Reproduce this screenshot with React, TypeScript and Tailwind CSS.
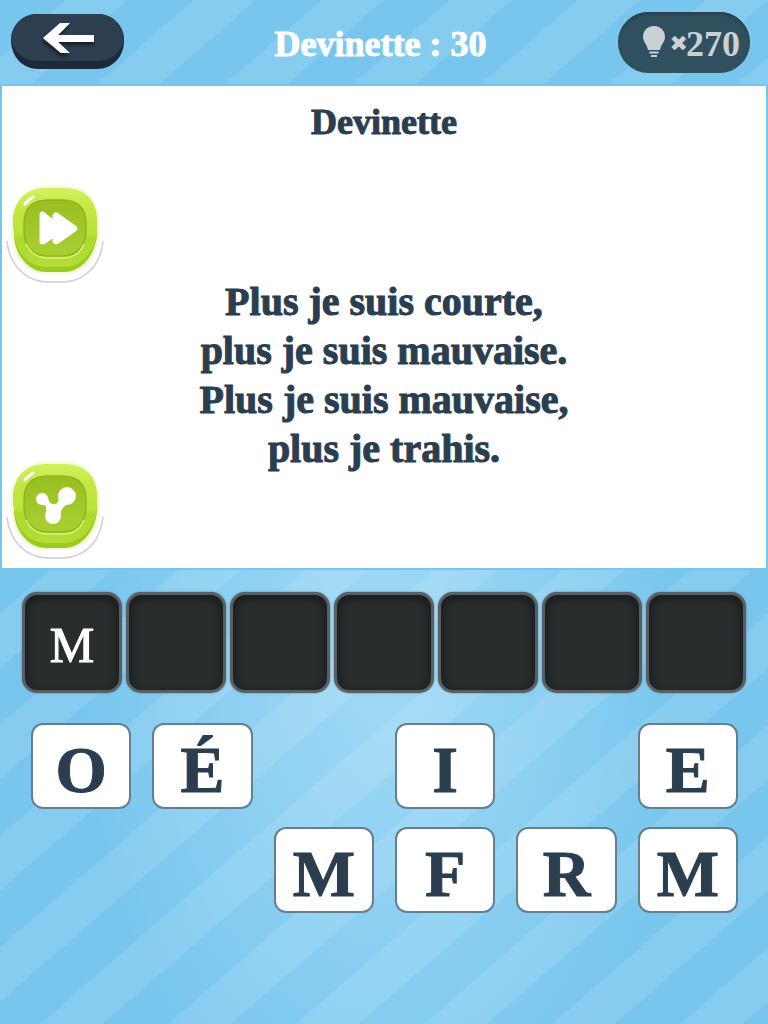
import React, { useState } from "react";

const slotCount = 7;

const letters: (string | null)[] = [
  "O", "É", null, "I", null, "E",
  null, null, "M", "F", "R", "M",
];

function GreenButton({
  label,
  id,
  children,
}: {
  label: string;
  id: string;
  children: React.ReactNode;
}) {
  return (
    <button type="button" aria-label={label} className="block cursor-pointer">
      <svg width="108" height="104" viewBox="0 0 108 104" aria-hidden="true">
        <defs>
          <linearGradient id={id + "-rim"} x1="0" y1="0" x2="0" y2="1">
            <stop offset="0" stopColor="#d3f060" />
            <stop offset="0.25" stopColor="#c4e843" />
            <stop offset="0.56" stopColor="#bde23c" />
            <stop offset="0.64" stopColor="#add82e" />
            <stop offset="1" stopColor="#b4de35" />
          </linearGradient>
          <linearGradient id={id + "-face"} x1="0" y1="0" x2="0" y2="1">
            <stop offset="0" stopColor="#98be22" />
            <stop offset="1" stopColor="#a9cf33" />
          </linearGradient>
        </defs>
        <path
          d="M7 57 C9 80 25 97 46 98 H64 C86 97 101 80 103 57"
          fill="#fff"
          stroke="#cfcdd6"
          strokeWidth="1.500"
        />
        <path
          d="M11 40 C12 14 26 2 46 2 H64 C86 2 99 14 99 40 V50 C99 74 84 90 64 90 H46 C26 90 12 74 12 50Z"
          fill="#f3fbd6"
        />
        <path
          d="M13 38 C14 17 26 5 46 5 H64 C85 5 97 17 97 38 V50 C96 70 82 88 64 88 H46 C28 88 14 70 14 50Z"
          fill="#9acb20"
        />
        <path
          d="M13 38 C14 16 26 4 46 4 H64 C85 4 97 16 97 38 V48 C96 66 82 83 64 83 H46 C28 83 14 66 14 48Z"
          fill={"url(#" + id + "-rim)"}
        />
        <path
          d="M24 40 C24 24 32 16 48 16 H62 C78 16 86 24 86 40 V46 C86 63 77 72 62 72 H48 C33 72 24 63 24 46Z"
          fill={"url(#" + id + "-face)"}
          stroke="#8fb51f"
          strokeWidth="1.500"
        />
        <path d="M26 60 C31 70 38 74 48 74 H62 C72 74 80 70 84 60" fill="none" stroke="#daf37c" strokeWidth="1.500" />
        <path d="M25 20 Q28 16 33 13" stroke="#fff" strokeWidth="3" strokeLinecap="round" fill="none" />
        {children}
      </svg>
    </button>
  );
}

export default function App() {
  const [answer] = useState<string[]>(["M"]);

  return (
    <main className="flex min-h-screen flex-col bg-[#78c6ee] bg-[repeating-linear-gradient(139deg,transparent_0px,transparent_43px,rgba(255,255,255,0.1)_43px,rgba(255,255,255,0.1)_84px),radial-gradient(ellipse_at_50%_64%,#a2daf6_0%,#78c6ee_56%)] font-['Liberation_Serif',serif] text-[#2b3e50]">
      <header className="grid h-[84px] grid-cols-[1fr_auto_1fr] items-center pr-[18px] pl-[11px]">
        <button type="button" aria-label="Retour" className="w-[113px] cursor-pointer">
          <svg width="113" height="56" viewBox="0 0 113 56" aria-hidden="true">
            <defs>
              <filter id="arrow-shadow" x="-20%" y="-20%" width="150%" height="160%">
                <feDropShadow dx="-1" dy="3" stdDeviation="1.5" floodColor="#0c151d" floodOpacity="0.85" />
              </filter>
            </defs>
            <path d="M0 26 C0 12 12 0 26 0 H87 C101 0 113 12 113 27 C113 43 101 55 86 55 H27 C12 55 0 43 0 26Z" fill="#1d2b38" />
            <path d="M0 23 C2 9 13 0 26 0 H87 C100 0 111 9 113 23 C112 37 101 47 87 47 H26 C12 47 1 37 0 23Z" fill="#2c3e50" />
            <path
              d="M32 24 L49 9 H59 L47 21 H83 V28 H47 L59 39 H50Z"
              fill="#fff"
              filter="url(#arrow-shadow)"
            />
          </svg>
        </button>
        <h1 className="pt-1 text-center text-[36px] leading-10 font-bold text-white [-webkit-text-stroke:1px]">
          Devinette : 30
        </h1>
        <button
          type="button"
          aria-label="Indices : 270"
          className="flex h-[61px] w-[132px] cursor-pointer items-center justify-end justify-self-end rounded-full bg-[#31505f] pr-[10px] text-[#c9d1d5] shadow-[inset_0_3px_3px_#29424f]"
        >
          <svg width="24" height="34" viewBox="0 0 24 34" aria-hidden="true">
            <path
              d="M12 1 C5 1 1 6 1 12 C1 17 5 19 6 25 H18 C19 19 23 17 23 12 C23 6 19 1 12 1Z"
              fill="currentColor"
            />
            <path d="M7.500 27.500 H16.500 M9 31 H15" stroke="currentColor" strokeWidth="2" />
          </svg>
          <span className="ml-1 flex items-center pt-1">
            <span className="-mr-0.5 font-['DejaVu_Sans',sans-serif] text-[22px] leading-10">✖</span>
            <span className="text-[36px] leading-10 font-bold">270</span>
          </span>
        </button>
      </header>

      <section className="relative flex h-[486px] flex-col items-center border-2 border-[#74c6ea] bg-white [-webkit-text-stroke:1px]">
        <h2 className="mt-[16px] text-[36px] leading-10 font-bold">Devinette</h2>
        <p className="mt-[135px] text-center text-[40px] leading-[49px] font-bold">
          Plus je suis courte,
          <br />
          plus je suis mauvaise.
          <br />
          Plus je suis mauvaise,
          <br />
          plus je trahis.
        </p>
        <div className="absolute top-[98px] left-[-2px]">
          <GreenButton label="Passer" id="skip">
            <path
              d="M41 30 Q42 28 44 30 L54 38 V32 Q55 28 58 31 L75 43 Q77 44 75 46 L58 58 Q55 60 54 57 V51 L45 58 Q42 60 41 58Z"
              fill="#fff"
              stroke="#fff"
              strokeWidth="3"
              strokeLinejoin="round"
            />
          </GreenButton>
        </div>
        <div className="absolute bottom-[4px] left-[-2px]">
          <GreenButton label="Partager" id="share">
            <path
              d="M43 33 Q48 35 49 41 Q51 45 56 44 Q59 42 59 37 L70 43 Q64 45 61 51 L60 57 H46 V49 Q47 46 44 45 L40 44Z"
              fill="#fff"
            />
            <circle cx="42" cy="39" r="6" fill="#fff" />
            <circle cx="67" cy="36" r="9" fill="#fff" />
            <circle cx="53" cy="56" r="8" fill="#fff" />
          </GreenButton>
        </div>
      </section>

      <section aria-label="Réponse" className="mt-[22px] grid grid-cols-7 gap-1 px-[22px]">
        {Array.from({ length: slotCount }, (_, i) => (
          <button
            key={i}
            type="button"
            aria-label={"Case " + (i + 1)}
            className="flex h-[101px] cursor-pointer items-center justify-center rounded-[15px] border-[3px] border-[#596063] bg-[#292d2e] pt-1 text-[50px] leading-none text-white shadow-[inset_0_3px_8px_2px_#1a1d1e,0_0_2px_#626a6e] [-webkit-text-stroke:1px]"
          >
            {answer[i] ?? ""}
          </button>
        ))}
      </section>

      <section aria-label="Lettres" className="mt-[30px] grid grid-cols-6 gap-x-[21px] gap-y-[18px] pr-[30px] pl-[31px]">
        {letters.map((letter, i) =>
          letter ? (
            <button
              key={i}
              type="button"
              className="flex h-[86px] cursor-pointer items-center justify-center rounded-xl border-2 border-[#647f91] bg-white pt-2 text-[66px] leading-none font-bold [-webkit-text-stroke:1px]"
            >
              {letter}
            </button>
          ) : (
            <span key={i} />
          )
        )}
      </section>
    </main>
  );
}
